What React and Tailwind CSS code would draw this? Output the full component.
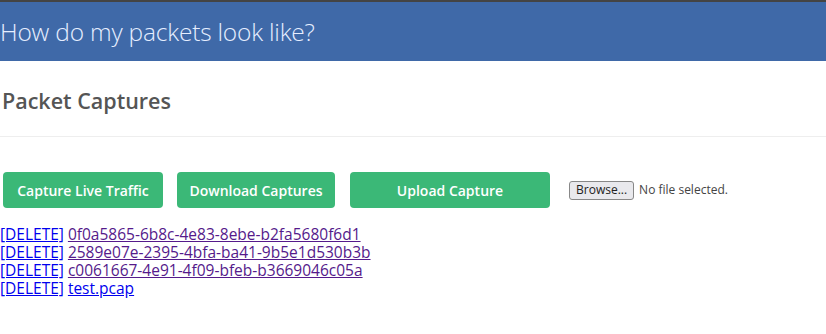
export default function App() {
  const captures = [
    { name: "0f0a5865-6b8c-4e83-8ebe-b2fa5680f6d1", visited: true },
    { name: "2589e07e-2395-4bfa-ba41-9b5e1d530b3b", visited: true },
    { name: "c0061667-4e91-4f09-bfeb-b3669046c05a", visited: true },
    { name: "test.pcap", visited: false },
  ];

  return (
    <div className="min-h-[334px] bg-white font-['Open_Sans',sans-serif]">
      <div className="border-t-2 border-[#444]">
        <div className="h-[59px] bg-[#3f69a8] flex items-center">
          <h1 className="text-[24.5px] font-light text-[#e6eeff] tracking-[-0.2px] pt-[2px]">
            How do my packets look like?
          </h1>
        </div>
      </div>

      <div className="h-[76px] flex items-center border-b border-[#eee]">
        <h2 className="pl-[2px] pt-[5px] text-[21.5px] font-semibold text-[#555]">
          Packet Captures
        </h2>
      </div>

      <div className="flex items-center pl-[3px] pt-[35px]">
        <button className="w-[160px] h-[36px] rounded bg-[#3bb877] text-white text-[14px] font-semibold">
          Capture Live Traffic
        </button>
        <button className="ml-[14px] w-[158px] h-[36px] rounded bg-[#3bb877] text-white text-[14px] font-semibold">
          Download Captures
        </button>
        <button className="ml-[15px] w-[200px] h-[36px] rounded bg-[#3bb877] text-white text-[14px] font-semibold">
          Upload Capture
        </button>
        <div className="ml-[19px] flex items-center gap-[5px] text-[12px] text-[#444]">
          <span className="h-[19px] px-[6px] flex items-center border border-[#888] rounded-[3px] bg-[#e9e9ed] text-[#222]">
            Browse...
          </span>
          <span>No file selected.</span>
        </div>
      </div>

      <div className="pt-[17px] text-[15.5px] leading-[18px]">
        {captures.map((c) => (
          <div key={c.name} className="h-[18px]">
            <a href="#" className="text-[#0000ee] underline">
              [DELETE]
            </a>{" "}
            <a
              href="#"
              className={c.visited ? "text-[#551a8b] underline" : "text-[#0000ee] underline"}
            >
              {c.name}
            </a>
          </div>
        ))}
      </div>
    </div>
  );
}
